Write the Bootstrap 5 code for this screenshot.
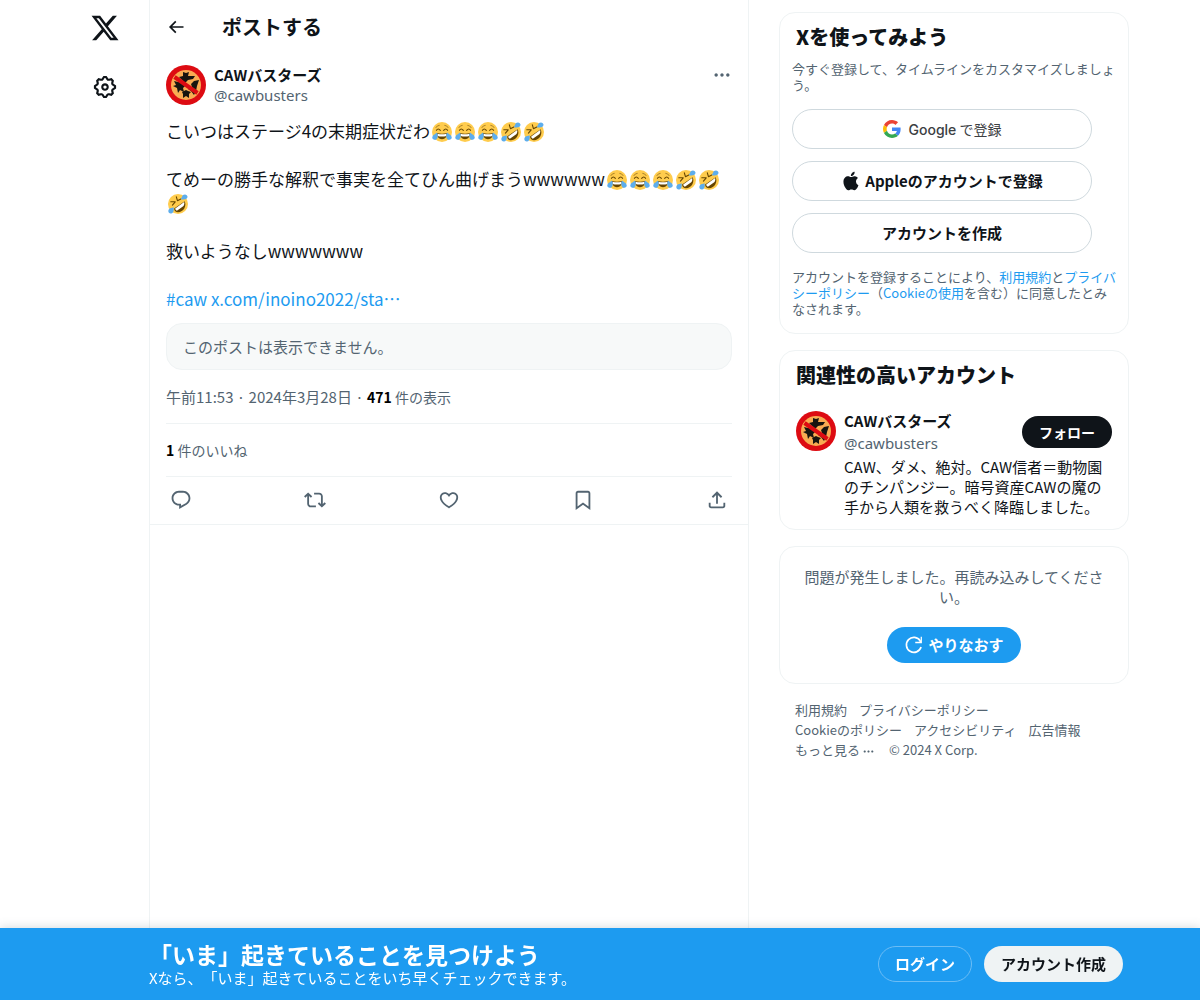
<!DOCTYPE html>
<html lang="ja">
<head>
<meta charset="utf-8">
<meta name="viewport" content="width=device-width, initial-scale=1">
<title>CAWバスターズ / X</title>
<link rel="stylesheet" href="https://cdn.jsdelivr.net/npm/bootstrap@5.3.0/dist/css/bootstrap.min.css">
<style>
  :root { --ink: #0f1419; --muted: #536471; --line: #eff3f4; --blue: #1d9bf0; }
  body { font-family: "Noto Sans CJK JP", "Liberation Sans", sans-serif; font-size: 15px; line-height: 20px; color: var(--ink); background: #fff; text-spacing-trim: space-all; }
  a { color: var(--blue); text-decoration: none; }
  a:hover { text-decoration: underline; }
  svg { display: block; fill: currentColor; flex: none; }
  .i20 { width: 20px; height: 20px; }
  .i22 { width: 22px; height: 22px; }
  .i26 { width: 26px; height: 26px; }
  .i30 { width: 30px; height: 30px; }
  .avatar { width: 40px; height: 40px; }
  .muted { color: var(--muted); }
  .handle { font-family: "Noto Sans", "Open Sans", sans-serif; color: var(--muted); }
  .icon-btn { border: 0; background: none; padding: 0; color: inherit; display: flex; align-items: center; justify-content: center; }
  .icon-btn.muted { color: var(--muted); }
  .gap-12 { gap: 12px; }
  .shell { max-width: 1078px; padding-right: 10px; }
  .site-nav { width: 88px; }
  .site-nav a { color: var(--ink); }
  .site-nav .brand-link { height: 56px; }
  .site-nav .gear-link { height: 62px; }
  .feed { max-width: 600px; min-width: 0; border: solid var(--line); border-width: 0 1px; }
  .feed-head { height: 54px; }
  .back-btn { width: 20px; margin-right: 36px; }
  .heading-lg { font-size: 20px; line-height: 24px; font-weight: 700; margin: 0; }
  .rail .heading-lg { font-weight: 800; }
  .post { padding: 11px 16px 0; border-bottom: 1px solid var(--line); }
  .post-text { font-size: 17px; line-height: 24px; margin: 14px 0 12px; white-space: pre-wrap; }
  .emoji { display: inline-block; width: 20px; height: 20px; margin: 0 1px 0 2px; vertical-align: -4px; }
  .notice { background: #f7f9f9; border: 1px solid var(--line); border-radius: 16px; padding: 12px 16px; line-height: 21px; color: var(--muted); }
  .meta-row { padding: 17px 0 16px; font-size: 15px; color: var(--muted); }
  .views { font-size: 14px; }
  .likes-row { border-top: 1px solid var(--line); padding: 16px 0; font-size: 14px; color: var(--muted); }
  .actions { border-top: 1px solid var(--line); height: 48px; padding: 0 4px 2px; color: var(--muted); }
  .rail { width: 350px; margin-left: 30px; padding-top: 12px; flex: none; }
  .panel { border: 1px solid var(--line); border-radius: 16px; margin-bottom: 16px; }
  .fine { font-size: 13px; line-height: 16px; color: var(--muted); margin: 0; }
  .signup-body { padding: 0 8px 0 12px; }
  .pill { border-radius: 20px; font-size: 15px; line-height: 20px; font-weight: 700; color: var(--ink); border: 1px solid transparent; padding: 0 16px; height: 36px; display: inline-flex; align-items: center; justify-content: center; }
  .pill-signup { width: 300px; height: 40px; border-color: #cfd9de; background: #fff; }
  .pill-google { font-size: 14px; font-weight: 400; color: #3c4043; }
  .latin-round { font-family: Inter, sans-serif; font-weight: 500; }
  .g-mark { width: 18px; height: 18px; }
  .pill-follow { height: 32px; font-size: 14px; color: #fff; background: var(--ink); }
  .pill-blue { color: #fff; background: var(--blue); }
  .pill-light { background: var(--line); }
  .pill-login { color: #fff; background: transparent; border-color: #6cbdf5; }
  .account-panel { padding-top: 12px; padding-bottom: 12px; }
  .account-row { padding-top: 24px; }
  .account-top { margin-bottom: 2px; }
  .account-top .handle { line-height: 24px; }
  .account-top .pill-follow { margin-bottom: 2px; }
  .retry-panel { padding: 20px; }
  .retry-text { margin: 0 0 20px; }
  .foot-links { font-size: 13px; column-gap: 12px; padding: 0 36px 0 16px; color: var(--muted); }
  .foot-links a { color: inherit; }
  .more-dots { width: 13px; height: 13px; margin: 2px 2px 0; }
  .join-bar { background: var(--blue); color: #fff; height: 72px; box-shadow: 0 0 10px rgba(101,119,134,.3); }
  .join-inner { max-width: 1078px; padding: 0 16px 0 88px; }
  .join-title { font-size: 23px; line-height: 28px; font-weight: 700; margin: 0; }
</style>
<script src="https://cdn.jsdelivr.net/npm/bootstrap@5.3.0/dist/js/bootstrap.bundle.min.js"></script>
</head>
<body>
<svg width="0" height="0" class="position-absolute" aria-hidden="true">
  <symbol id="ava" viewBox="0 0 40 40">
    <circle cx="20" cy="20" r="20" fill="#dd0b12"/>
    <circle cx="20" cy="20" r="15" fill="#f9ab52"/>
    <g fill="#17140f">
      <path d="M17 7l3 1 3-1-1 4 7 0-2 3-5 1-3 3-3-3-3-3 4-1z"/>
      <path d="M8 16l4 1 3-1 2 3 3 1-3 3 1 4-4-2-2 3-1-5-4-2 3-1z"/>
      <path d="M33 15l-5 1-3 3 1 3-4 2 3 2 3 4 2-4 1-5z"/>
      <path d="M16 27l4-2 2 1 3 1-2 2 0 4-3-2-3 2 0-4z"/>
    </g>
    <path d="M8.500 12L31.500 28" stroke="#dd0b12" stroke-width="4"/>
  </symbol>
  <symbol id="joy" viewBox="0 0 36 36">
    <circle cx="18" cy="18" r="18" fill="#ffcc4d"/>
    <path d="M8 15q3-5 7 0M21 15q4-5 7 0" fill="none" stroke="#664500" stroke-width="2" stroke-linecap="round"/>
    <path d="M7 10q2-4 6-4M29 10q-2-4-6-4" fill="none" stroke="#9a7320" stroke-width="1.500" stroke-linecap="round"/>
    <path d="M9 20q9 2 18 0 0 11-9 11T9 20z" fill="#664500"/>
    <path d="M10 21q8 2 16 0v4q-8 2-16 0z" fill="#fff"/>
    <path d="M9 19c2 5 2 11-2 13-4 1-8-2-6-6 1-3 5-4 8-7zM27 19c-2 5-2 11 2 13 4 1 8-2 6-6-1-3-5-4-8-7z" fill="#5dadec"/>
  </symbol>
  <symbol id="rofl" viewBox="0 0 36 36">
    <circle cx="18" cy="18" r="18" fill="#ffcc4d"/>
    <path d="M30 13c4 9-2 19-12 20-4 0-7-3-7-7z" fill="#664500"/>
    <path d="M29 14.500c1 3 0 5-1 7L16 30c-2-1-3-2-3-4z" fill="#fff"/>
    <path d="M5 14l8 0-5 6M15 5l2 7 6-3" fill="none" stroke="#664500" stroke-width="2" stroke-linecap="round" stroke-linejoin="round"/>
    <path d="M10 24c1 5 0 10-4 11-5 1-7-5-4-8 2-2 5-1 8-3zM23 9c2-2 2-5 4-7 4-3 9 0 8 4-1 4-7 5-12 3z" fill="#5dadec"/>
  </symbol>
  <symbol id="dots" viewBox="0 0 24 24"><path d="M3 12c0-1.100.9-2 2-2s2 .9 2 2-.9 2-2 2-2-.9-2-2zm9 2c1.100 0 2-.9 2-2s-.9-2-2-2-2 .9-2 2 .9 2 2 2zm7 0c1.100 0 2-.9 2-2s-.9-2-2-2-2 .9-2 2 .9 2 2 2z"/></symbol>
</svg>

<div class="shell d-flex mx-auto min-vh-100">
  <nav class="site-nav d-flex flex-column flex-shrink-0" aria-label="メイン">
    <a href="#" class="brand-link d-flex align-items-center justify-content-center" aria-label="X"><svg class="i30" viewBox="0 0 24 24"><path d="M18.244 2.250h3.308l-7.227 8.260 8.502 11.240H16.170l-5.214-6.817L4.990 21.750H1.680l7.730-8.835L1.254 2.250H8.080l4.713 6.231zm-1.161 17.520h1.833L7.084 4.126H5.117z"/></svg></a>
    <a href="#" class="gear-link d-flex align-items-center justify-content-center" aria-label="設定"><svg class="i26" viewBox="0 0 24 24"><path d="M10.540 1.750h2.920l1.570 2.360c.11.17.32.25.53.21l2.530-.59 2.170 2.170-.58 2.540c-.05.2.04.41.21.53l2.360 1.570v2.920l-2.360 1.570c-.17.12-.26.33-.21.53l.58 2.540-2.170 2.170-2.530-.59c-.21-.04-.42.04-.53.21l-1.570 2.360h-2.920l-1.580-2.360c-.11-.17-.32-.25-.52-.21l-2.540.59-2.170-2.170.58-2.540c.05-.2-.03-.41-.21-.53l-2.350-1.570v-2.920L4.100 8.970c.18-.12.26-.33.21-.53L3.730 5.900 5.900 3.730l2.540.59c.2.04.41-.04.52-.21l1.580-2.360zm1.070 2l-.98 1.470C10.050 6.080 9 6.500 7.990 6.270l-1.460-.34-.6.6.33 1.460c.24 1.010-.18 2.070-1.050 2.640l-1.460.98v.78l1.460.98c.87.57 1.290 1.630 1.050 2.640l-.33 1.460.6.6 1.460-.34c1.010-.23 2.060.19 2.640 1.050l.98 1.470h.78l.97-1.470c.58-.86 1.630-1.280 2.650-1.050l1.450.34.61-.6-.34-1.460c-.23-1.010.18-2.070 1.050-2.640l1.470-.98v-.78l-1.470-.98c-.87-.57-1.280-1.630-1.050-2.640l.34-1.460-.61-.6-1.450.34c-1.020.23-2.070-.19-2.650-1.050l-.97-1.470h-.78zM12 10.500c-.83 0-1.500.67-1.500 1.500s.67 1.500 1.500 1.500c.82 0 1.500-.67 1.500-1.500s-.68-1.500-1.500-1.500zM8.500 12c0-1.930 1.560-3.500 3.500-3.500 1.930 0 3.500 1.570 3.500 3.500s-1.570 3.500-3.500 3.500c-1.940 0-3.500-1.570-3.500-3.500z"/></svg></a>
  </nav>

  <main class="feed flex-grow-1">
    <header class="feed-head d-flex align-items-center px-3">
      <button type="button" class="icon-btn back-btn" aria-label="戻る"><svg class="i20" viewBox="0 0 24 24"><path d="M7.414 13l5.043 5.040-1.414 1.420L3.586 12l7.457-7.460 1.414 1.420L7.414 11H21v2H7.414z"/></svg></button>
      <h1 class="heading-lg">ポストする</h1>
    </header>

    <article class="post">
      <div class="d-flex">
        <svg class="avatar me-2"><use href="#ava"/></svg>
        <div class="flex-grow-1">
          <div class="fw-bold">CAWバスターズ</div>
          <div class="handle">@cawbusters</div>
        </div>
        <button type="button" class="icon-btn i20 muted" aria-label="もっと見る"><svg class="i20"><use href="#dots"/></svg></button>
      </div>
      <div class="post-text">こいつはステージ4の末期症状だわ<svg class="emoji"><use href="#joy"/></svg><svg class="emoji"><use href="#joy"/></svg><svg class="emoji"><use href="#joy"/></svg><svg class="emoji"><use href="#rofl"/></svg><svg class="emoji"><use href="#rofl"/></svg>

てめーの勝手な解釈で事実を全てひん曲げまうwwwwww<svg class="emoji"><use href="#joy"/></svg><svg class="emoji"><use href="#joy"/></svg><svg class="emoji"><use href="#joy"/></svg><svg class="emoji"><use href="#rofl"/></svg><svg class="emoji"><use href="#rofl"/></svg><svg class="emoji"><use href="#rofl"/></svg>

救いようなしwwwwwww

<a href="#">#caw</a> <a href="#">x.com/inoino2022/sta…</a></div>
      <div class="notice">このポストは表示できません。</div>
      <div class="meta-row">午前11:53 · 2024年3月28日 · <span class="views"><b class="text-black">471</b> 件の表示</span></div>
      <div class="likes-row"><b class="text-black">1</b> 件のいいね</div>
      <div class="actions d-flex align-items-center justify-content-between">
        <button type="button" class="icon-btn" aria-label="返信"><svg class="i22" viewBox="0 0 24 24"><path d="M1.751 10c0-4.420 3.584-8 8.005-8h4.366c4.490 0 8.129 3.640 8.129 8.130 0 2.960-1.607 5.680-4.196 7.110l-8.054 4.460v-3.690h-.067c-4.490.1-8.183-3.510-8.183-8.010zm8.005-6c-3.317 0-6.005 2.690-6.005 6 0 3.370 2.770 6.080 6.138 6.010l.351-.01h1.761v2.300l5.087-2.810c1.951-1.080 3.163-3.130 3.163-5.360 0-3.390-2.744-6.130-6.129-6.130H9.756z"/></svg></button>
        <button type="button" class="icon-btn" aria-label="リポスト"><svg class="i22" viewBox="0 0 24 24"><path d="M4.500 3.880l4.432 4.140-1.364 1.460L5.500 7.550V16c0 1.100.896 2 2 2H13v2H7.500c-2.209 0-4-1.790-4-4V7.550L1.432 9.480.068 8.020 4.500 3.880zM16.500 6H11V4h5.500c2.209 0 4 1.790 4 4v8.450l2.068-1.930 1.364 1.460-4.432 4.140-4.432-4.140 1.364-1.460 2.068 1.930V8c0-1.100-.896-2-2-2z"/></svg></button>
        <button type="button" class="icon-btn" aria-label="いいね"><svg class="i22" viewBox="0 0 24 24"><path d="M16.697 5.500c-1.222-.06-2.679.51-3.890 2.160l-.805 1.090-.806-1.090C9.984 6.010 8.526 5.440 7.304 5.500c-1.243.07-2.349.78-2.910 1.910-.552 1.120-.633 2.780.479 4.820 1.074 1.970 3.257 4.270 7.129 6.610 3.870-2.340 6.052-4.640 7.126-6.610 1.111-2.040 1.030-3.700.477-4.820-.561-1.130-1.666-1.840-2.908-1.910zm4.187 7.690c-1.351 2.480-4.001 5.120-8.379 7.670l-.503.3-.504-.3c-4.379-2.550-7.029-5.190-8.382-7.670-1.360-2.500-1.410-4.860-.514-6.670.887-1.790 2.647-2.910 4.601-3.010 1.651-.09 3.368.56 4.798 2.010 1.429-1.450 3.146-2.100 4.796-2.010 1.954.1 3.714 1.220 4.601 3.010.896 1.810.846 4.170-.514 6.670z"/></svg></button>
        <button type="button" class="icon-btn" aria-label="ブックマーク"><svg class="i22" viewBox="0 0 24 24"><path d="M4 4.500C4 3.120 5.119 2 6.500 2h11C18.881 2 20 3.120 20 4.500v18.440l-8-5.710-8 5.710V4.500zM6.500 4c-.276 0-.5.22-.5.5v14.560l6-4.290 6 4.290V4.500c0-.28-.224-.5-.5-.5h-11z"/></svg></button>
        <button type="button" class="icon-btn" aria-label="共有"><svg class="i22" viewBox="0 0 24 24"><path d="M12 2.590l5.700 5.700-1.410 1.420L13 6.410V16h-2V6.410l-3.300 3.300-1.410-1.420L12 2.590zM21 15l-.02 3.510c0 1.380-1.120 2.490-2.500 2.490H5.500C4.110 21 3 19.880 3 18.500V15h2v3.500c0 .28.22.5.5.5h12.980c.28 0 .5-.22.5-.5L19 15h2z"/></svg></button>
      </div>
    </article>
  </main>

  <aside class="rail">
    <section class="panel pb-3">
      <h2 class="heading-lg px-3 pt-2 mt-1 pb-2 mb-1">Xを使ってみよう</h2>
      <div class="signup-body">
        <p class="fine">今すぐ登録して、タイムラインをカスタマイズしましょう。</p>
        <div class="d-flex flex-column gap-12 my-3">
          <button type="button" class="pill pill-signup pill-google"><svg class="me-2 g-mark" viewBox="0 0 48 48"><path fill="#EA4335" d="M24 9.500c3.540 0 6.710 1.220 9.210 3.600l6.850-6.850C35.900 2.380 30.470 0 24 0 14.620 0 6.510 5.380 2.560 13.220l7.980 6.190C12.430 13.720 17.740 9.500 24 9.500z"/><path fill="#4285F4" d="M46.980 24.550c0-1.570-.15-3.090-.38-4.550H24v9.020h12.940c-.58 2.960-2.260 5.480-4.780 7.180l7.730 6c4.510-4.180 7.090-10.360 7.090-17.650z"/><path fill="#FBBC05" d="M10.530 28.590c-.48-1.450-.76-2.990-.76-4.590s.27-3.140.76-4.590l-7.980-6.190C.92 16.460 0 20.120 0 24c0 3.880.92 7.540 2.560 10.780l7.970-6.190z"/><path fill="#34A853" d="M24 48c6.480 0 11.930-2.130 15.890-5.810l-7.730-6c-2.150 1.450-4.920 2.300-8.160 2.300-6.260 0-11.570-4.220-13.470-9.910l-7.980 6.190C6.510 42.620 14.620 48 24 48z"/></svg><span><span class="latin-round">Google</span> で登録</span></button>
          <button type="button" class="pill pill-signup"><svg class="i20 me-1" viewBox="0 0 24 24"><path d="M16.365 1.430c0 1.140-.493 2.270-1.177 3.080-.744.9-1.990 1.570-2.987 1.570-.12 0-.23-.02-.3-.03-.01-.06-.04-.22-.04-.39 0-1.150.572-2.270 1.206-2.980.804-.94 2.142-1.640 3.248-1.680.03.13.05.28.05.43zm4.565 15.710c-.03.07-.463 1.580-1.518 3.120-.945 1.340-1.940 2.710-3.430 2.710-1.517 0-1.900-.88-3.630-.88-1.698 0-2.302.91-3.670.91-1.377 0-2.332-1.260-3.428-2.800-1.287-1.820-2.323-4.630-2.323-7.280 0-4.280 2.797-6.550 5.552-6.550 1.448 0 2.675.95 3.600.95.865 0 2.222-1.010 3.902-1.010.613 0 2.886.06 4.374 2.190-.13.09-2.383 1.370-2.383 4.190 0 3.260 2.854 4.420 2.955 4.450z"/></svg>Appleのアカウントで登録</button>
          <button type="button" class="pill pill-signup">アカウントを作成</button>
        </div>
        <p class="fine">アカウントを登録することにより、<a href="#">利用規約</a>と<a href="#">プライバシーポリシー</a>（<a href="#">Cookieの使用</a>を含む）に同意したとみなされます。</p>
      </div>
    </section>

    <section class="panel px-3 account-panel">
      <h2 class="heading-lg">関連性の高いアカウント</h2>
      <div class="d-flex account-row">
        <svg class="avatar me-2"><use href="#ava"/></svg>
        <div class="flex-grow-1">
          <div class="account-top d-flex justify-content-between align-items-center">
            <div>
              <div class="fw-bold">CAWバスターズ</div>
              <div class="handle">@cawbusters</div>
            </div>
            <button type="button" class="pill pill-follow">フォロー</button>
          </div>
          <div>CAW、ダメ、絶対。CAW信者＝動物園のチンパンジー。暗号資産CAWの魔の手から人類を救うべく降臨しました。</div>
        </div>
      </div>
    </section>

    <section class="panel retry-panel text-center">
      <p class="muted retry-text">問題が発生しました。再読み込みしてください。</p>
      <button type="button" class="pill pill-blue"><svg class="i20 me-1" viewBox="0 0 24 24"><path d="M20.500 14.500A9 9 0 1 1 19.500 7" fill="none" stroke="currentColor" stroke-width="2"/><path d="M21.500 2v8h-8V8h4.700L20 6V2z"/></svg>やりなおす</button>
    </section>

    <footer class="foot-links d-flex flex-wrap">
      <a href="#">利用規約</a><a href="#">プライバシーポリシー</a>
      <a href="#">Cookieのポリシー</a><a href="#">アクセシビリティ</a><a href="#">広告情報</a>
      <a href="#" class="d-flex align-items-center">もっと見る<svg class="more-dots"><use href="#dots"/></svg></a><span>© 2024 X Corp.</span>
    </footer>
  </aside>
</div>

<div class="join-bar fixed-bottom">
  <div class="join-inner h-100 mx-auto d-flex align-items-center justify-content-between">
    <div>
      <p class="join-title">「いま」起きていることを見つけよう</p>
      <div>Xなら、「いま」起きていることをいち早くチェックできます。</div>
    </div>
    <div class="d-flex gap-12">
      <button type="button" class="pill pill-login">ログイン</button>
      <button type="button" class="pill pill-light">アカウント作成</button>
    </div>
  </div>
</div>
</body>
</html>
